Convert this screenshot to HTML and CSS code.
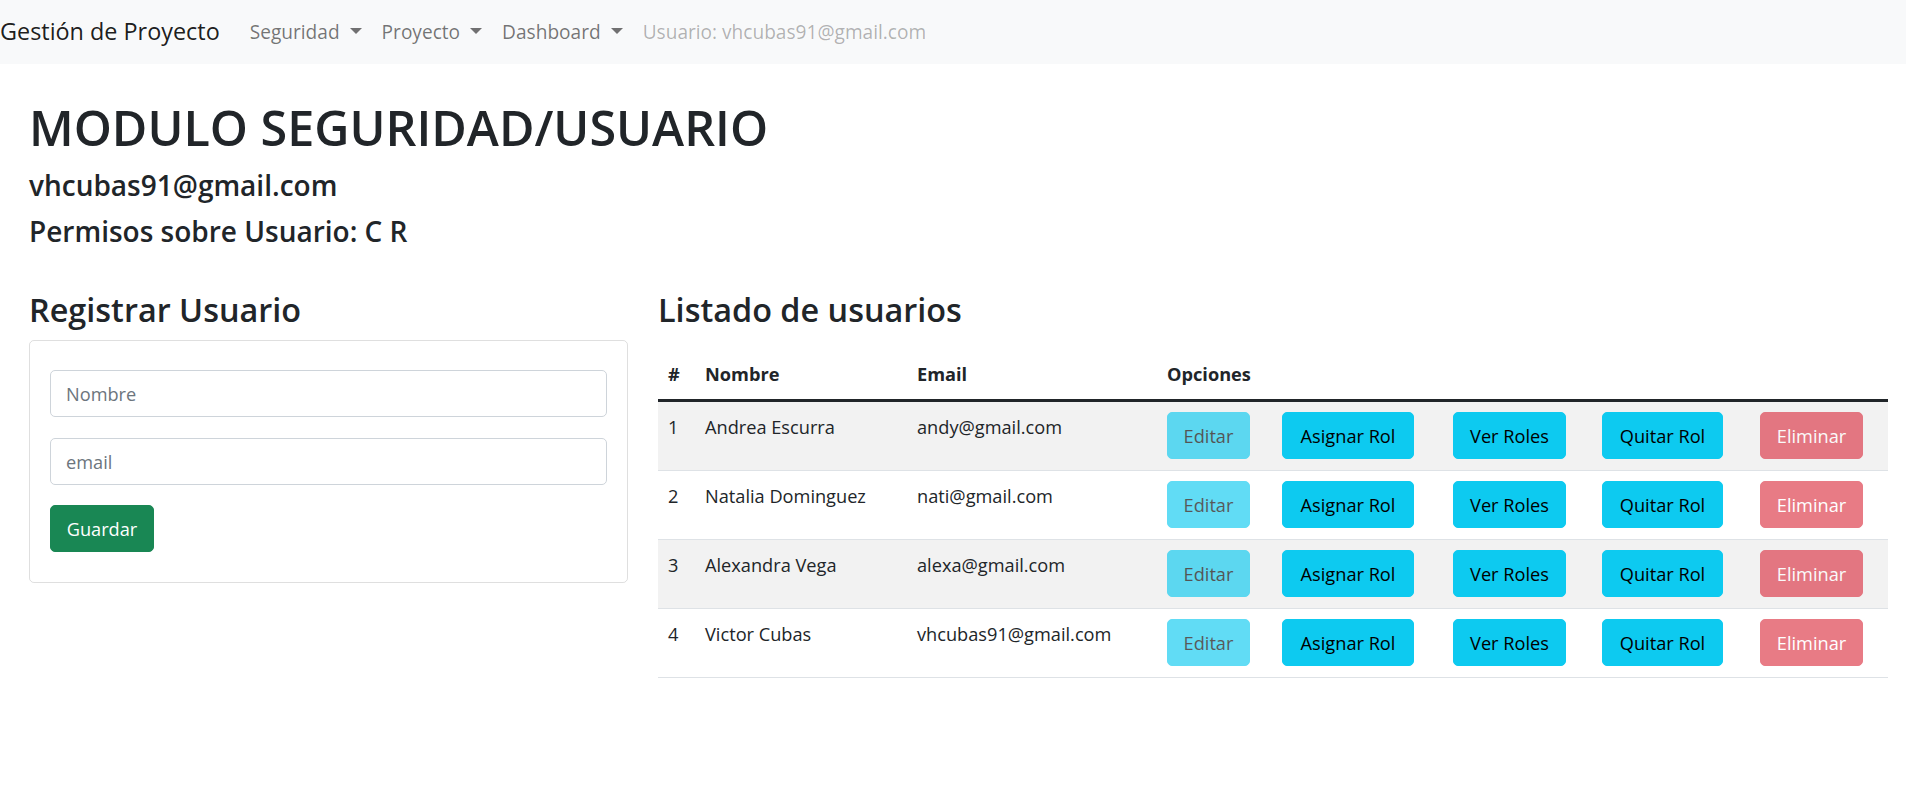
FILE: index.html
```html
<!DOCTYPE html>
<html lang="es">
<head>
<meta charset="utf-8">
<title>Gestión de Proyecto</title>
<link rel="stylesheet" href="styles.css">
</head>
<body>
<nav class="navbar">
  <a class="brand" href="#">Gestión de Proyecto</a>
  <ul class="nav">
    <li><a class="nav-link dropdown" href="#">Seguridad</a></li>
    <li><a class="nav-link dropdown" href="#">Proyecto</a></li>
    <li><a class="nav-link dropdown" href="#">Dashboard</a></li>
    <li><span class="nav-link disabled">Usuario: vhcubas91@gmail.com</span></li>
  </ul>
</nav>
<main class="page">
  <h1 class="title">MODULO SEGURIDAD/USUARIO</h1>
  <h4 class="subtitle">vhcubas91@gmail.com</h4>
  <h4 class="subtitle">Permisos sobre Usuario: C R</h4>
  <div class="row">
    <section class="col-left">
      <h3 class="section-title">Registrar Usuario</h3>
      <div class="card">
        <form class="form">
          <input class="form-control" type="text" placeholder="Nombre">
          <input class="form-control" type="text" placeholder="email">
          <button class="btn btn-success btn-save" type="button">Guardar</button>
        </form>
      </div>
    </section>
    <section class="col-right">
      <h3 class="section-title">Listado de usuarios</h3>
      <table class="table">
        <colgroup>
          <col class="c-num"><col class="c-name"><col class="c-mail"><col class="c-edit"><col class="c-assign"><col class="c-view"><col class="c-remove"><col class="c-delete">
        </colgroup>
        <thead>
          <tr><th>#</th><th>Nombre</th><th>Email</th><th colspan="5">Opciones</th></tr>
        </thead>
        <tbody>
          <tr>
            <td>1</td><td>Andrea Escurra</td><td>andy@gmail.com</td>
            <td><button class="btn btn-info btn-edit" disabled>Editar</button></td>
            <td><button class="btn btn-info btn-assign">Asignar Rol</button></td>
            <td><button class="btn btn-info btn-view">Ver Roles</button></td>
            <td><button class="btn btn-info btn-remove">Quitar Rol</button></td>
            <td><button class="btn btn-danger btn-delete" disabled>Eliminar</button></td>
          </tr>
          <tr>
            <td>2</td><td>Natalia Dominguez</td><td>nati@gmail.com</td>
            <td><button class="btn btn-info btn-edit" disabled>Editar</button></td>
            <td><button class="btn btn-info btn-assign">Asignar Rol</button></td>
            <td><button class="btn btn-info btn-view">Ver Roles</button></td>
            <td><button class="btn btn-info btn-remove">Quitar Rol</button></td>
            <td><button class="btn btn-danger btn-delete" disabled>Eliminar</button></td>
          </tr>
          <tr>
            <td>3</td><td>Alexandra Vega</td><td>alexa@gmail.com</td>
            <td><button class="btn btn-info btn-edit" disabled>Editar</button></td>
            <td><button class="btn btn-info btn-assign">Asignar Rol</button></td>
            <td><button class="btn btn-info btn-view">Ver Roles</button></td>
            <td><button class="btn btn-info btn-remove">Quitar Rol</button></td>
            <td><button class="btn btn-danger btn-delete" disabled>Eliminar</button></td>
          </tr>
          <tr>
            <td>4</td><td>Victor Cubas</td><td>vhcubas91@gmail.com</td>
            <td><button class="btn btn-info btn-edit" disabled>Editar</button></td>
            <td><button class="btn btn-info btn-assign">Asignar Rol</button></td>
            <td><button class="btn btn-info btn-view">Ver Roles</button></td>
            <td><button class="btn btn-info btn-remove">Quitar Rol</button></td>
            <td><button class="btn btn-danger btn-delete" disabled>Eliminar</button></td>
          </tr>
        </tbody>
      </table>
    </section>
  </div>
</main>
</body>
</html>
```

FILE: styles.css
```css
* { box-sizing: border-box; }

html, body { margin: 0; padding: 0; }

body {
  font-family: "Open Sans", "Noto Sans", sans-serif;
  font-size: 18.2px;
  line-height: 30px;
  color: #212529;
  background: #fff;
}

/* Navbar */
.navbar {
  display: flex;
  align-items: center;
  height: 64px;
  background: #f8f9fa;
}

.brand {
  font-size: 23.4px;
  line-height: 37.5px;
  color: rgba(0, 0, 0, 0.9);
  text-decoration: none;
  white-space: nowrap;
  margin-right: 20px;
}

.nav {
  display: flex;
  list-style: none;
  margin: 0;
  padding: 0;
}

.nav-link {
  display: block;
  padding: 0 10px;
  font-size: 19.1px;
  color: rgba(0, 0, 0, 0.55);
  text-decoration: none;
  white-space: nowrap;
}

.dropdown::after {
  content: "";
  display: inline-block;
  margin-left: 10px;
  vertical-align: 5px;
  border-top: 6px solid;
  border-left: 6px solid transparent;
  border-right: 6px solid transparent;
}

.disabled { color: rgba(0, 0, 0, 0.3); }

/* Page */
.page {
  padding: 33px 18px 0 29px;
}

.title {
  font-size: 48.5px;
  line-height: 60px;
  font-weight: 600;
  margin: 0 0 10px;
}

.subtitle {
  font-size: 28px;
  line-height: 36px;
  font-weight: 600;
  margin: 0 0 10px;
}

.row {
  display: grid;
  grid-template-columns: 599px 1fr;
  column-gap: 30px;
  margin-top: 39px;
}

.section-title {
  font-size: 32.4px;
  line-height: 42px;
  font-weight: 600;
  margin: 0 0 10px;
}

/* Card / form */
.card {
  border: 1px solid rgba(0, 0, 0, 0.125);
  border-radius: 5px;
  padding: 29px 20px 30px;
}

.form {
  display: flex;
  flex-direction: column;
  align-items: flex-start;
}

.form-control {
  display: block;
  width: 100%;
  height: 47px;
  padding: 0 15px;
  margin: 0 0 21px;
  font: inherit;
  color: #212529;
  background: #fff;
  border: 1px solid #ced4da;
  border-radius: 5px;
}

.form-control:nth-of-type(2) { margin-bottom: 20px; }

.form-control::placeholder { color: #6c757d; }

/* Buttons */
.btn {
  display: inline-flex;
  align-items: center;
  justify-content: center;
  height: 47px;
  padding: 0;
  font: inherit;
  border: 1px solid transparent;
  border-radius: 5px;
  cursor: pointer;
  white-space: nowrap;
}

.btn-success { background: #198754; border-color: #198754; color: #fff; }
.btn-info { background: #0dcaf0; border-color: #0dcaf0; color: #000; }
.btn-danger { background: #dc3545; border-color: #dc3545; color: #fff; }
.btn:disabled { opacity: 0.65; cursor: default; }

.btn-save { width: 104px; }
.btn-edit { width: 83px; }
.btn-assign { width: 132px; }
.btn-view { width: 113px; }
.btn-remove { width: 121px; }
.btn-delete { width: 103px; }

/* Table */
.table {
  width: 100%;
  table-layout: fixed;
  border-collapse: collapse;
  margin-top: 19px;
}

.c-num { width: 37px; }
.c-name { width: 212px; }
.c-mail { width: 250px; }
.c-edit { width: 115px; }
.c-assign { width: 171px; }
.c-view { width: 149px; }
.c-remove { width: 158px; }
.c-delete { width: 138px; }

.table th {
  text-align: left;
  font-weight: 700;
  padding: 10px;
  border-bottom: 3px solid #212529;
  white-space: nowrap;
}

.table td {
  padding: 10px 10px 11px;
  vertical-align: top;
  white-space: nowrap;
}

.table tbody tr { border-bottom: 1px solid #dee2e6; }
.table tbody tr:nth-child(odd) td { background: #f2f2f2; }
```
